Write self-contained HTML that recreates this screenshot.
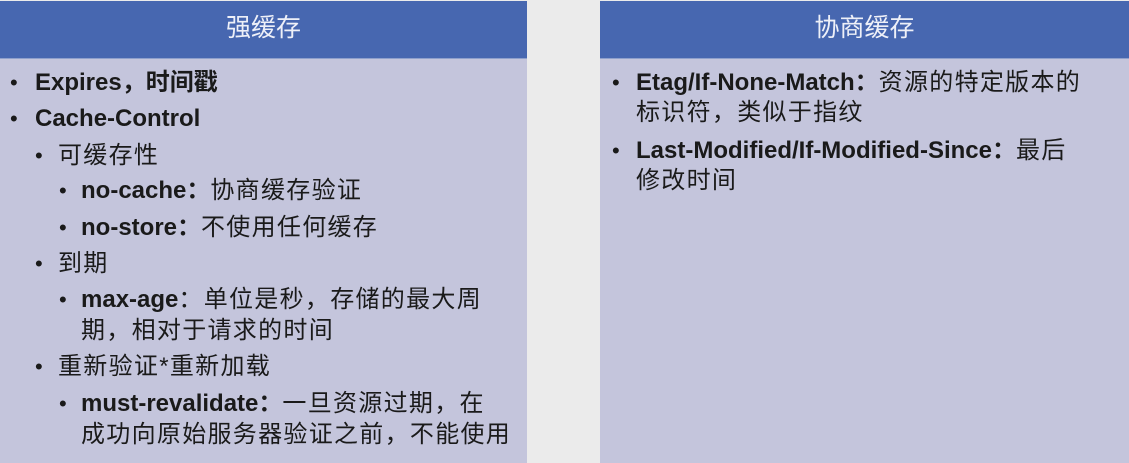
<!DOCTYPE html>
<html><head><meta charset="utf-8"><style>
body{margin:0;width:1129px;height:463px;background:#ebebeb;position:relative;overflow:hidden;font-family:"Liberation Sans","Noto Sans CJK SC",sans-serif;color:#1a1a1a}
.p{position:absolute;top:1px;height:462px;background:#c4c5dc}
.h{height:57px;background:#4767b0;color:#eef0f8;font-size:25px;text-align:center;line-height:54px;border-bottom:1px solid #8fa0cc}
.l{position:absolute;font-size:24px;white-space:nowrap;line-height:30px;letter-spacing:1.3px}
.l b{font-weight:bold;letter-spacing:0}
.d{position:absolute;font-size:22px;line-height:30px}
</style></head><body>
<div class="p" style="left:0;width:527px"><div class="h">强缓存</div></div>
<div class="p" style="left:600px;width:529px"><div class="h">协商缓存</div></div>

<div class="d" style="left:10px;top:68px">•</div><div class="l" style="left:35px;top:68px"><b>Expires，时间戳</b></div>
<div class="d" style="left:10px;top:104px">•</div><div class="l" style="left:35px;top:104px"><b>Cache-Control</b></div>
<div class="d" style="left:35px;top:141px">•</div><div class="l" style="left:58px;top:141px">可缓存性</div>
<div class="d" style="left:59px;top:176px">•</div><div class="l" style="left:81px;top:176px"><b>no-cache：</b>协商缓存验证</div>
<div class="d" style="left:59px;top:213px">•</div><div class="l" style="left:81px;top:213px"><b>no-store：</b>不使用任何缓存</div>
<div class="d" style="left:35px;top:249px">•</div><div class="l" style="left:58px;top:249px">到期</div>
<div class="d" style="left:59px;top:285px">•</div><div class="l" style="left:81px;top:285px"><b>max-age</b>：单位是秒，存储的最大周</div>
<div class="l" style="left:81px;top:316px">期，相对于请求的时间</div>
<div class="d" style="left:35px;top:352px">•</div><div class="l" style="left:58px;top:352px">重新验证*重新加载</div>
<div class="d" style="left:59px;top:389px">•</div><div class="l" style="left:81px;top:389px"><b>must-revalidate：</b>一旦资源过期，在</div>
<div class="l" style="left:81px;top:420px">成功向原始服务器验证之前，不能使用</div>

<div class="d" style="left:612px;top:68px">•</div><div class="l" style="left:636px;top:68px"><b>Etag/If-None-Match：</b>资源的特定版本的</div>
<div class="l" style="left:636px;top:98px">标识符，类似于指纹</div>
<div class="d" style="left:612px;top:136px">•</div><div class="l" style="left:636px;top:136px"><b>Last-Modified/If-Modified-Since：</b>最后</div>
<div class="l" style="left:636px;top:166px">修改时间</div>
</body></html>
